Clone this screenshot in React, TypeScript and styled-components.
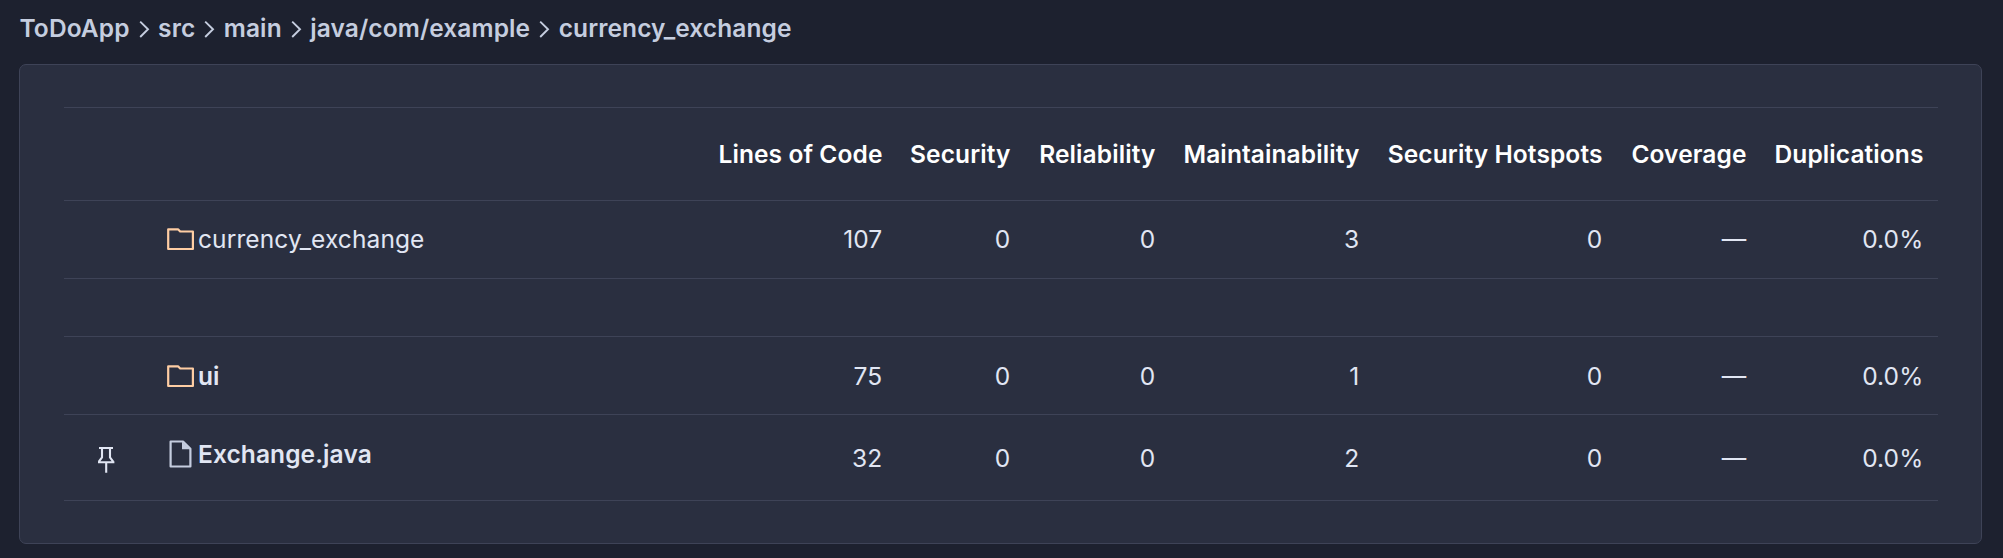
import React from "react";
import styled, { createGlobalStyle } from "styled-components";

const GlobalStyle = createGlobalStyle`
  * { box-sizing: border-box; }
  body {
    margin: 0;
    min-height: 558px;
    background: rgb(29, 33, 47);
    color: rgb(225, 230, 243);
    font: 400 24.5px/35px Inter, "Liberation Sans", sans-serif;
    letter-spacing: 0.1px;
  }
`;

const LINE = "rgb(62, 67, 87)";

const Page = styled.main`
  padding: 11px 21px 14px 19px;
`;

const Breadcrumbs = styled.nav`
  display: flex;
  align-items: center;
  height: 35px;
  margin-bottom: 18px;
  color: rgb(197, 205, 223);
  font-weight: 600;
`;

const Crumb = styled.span`
  padding-left: 0.5px;
  white-space: nowrap;
`;

const Panel = styled.section`
  height: 480px;
  padding: 42px 43px 0 44px;
  background: rgb(42, 47, 64);
  border: 1px solid ${LINE};
  border-radius: 7px;
`;

const Table = styled.div`
  border-top: 1px solid ${LINE};
`;

const Row = styled.div<{ $height: number; $drop?: number }>`
  display: grid;
  grid-template-columns: 88px 745px 128px 145px 204px 243px 144px 177px;
  align-items: center;
  height: ${(p) => p.$height}px;
  padding-top: ${(p) => p.$drop ?? 0}px;
  border-bottom: 1px solid ${LINE};
`;

const HeadRow = styled(Row)`
  grid-template-columns: 833px 128px 145px 204px 243px 144px 177px;
`;

const HeadCell = styled.div`
  padding-right: 14.5px;
  color: #fff;
  font-weight: 600;
  text-align: right;
  white-space: nowrap;
`;

const ValueCell = styled.div`
  padding-right: 14.7px;
  text-align: right;
`;

const NameAndLines = styled.div`
  display: grid;
  grid-template-columns: 1fr 100px;
  align-items: center;
`;

const NameCell = styled.div<{ $strong?: boolean; $raised?: boolean }>`
  display: grid;
  grid-template-columns: 32px 1fr;
  align-items: center;
  padding: 0 0 ${(p) => (p.$raised ? 9 : 0)}px 14px;
  font-weight: ${(p) => (p.$strong ? 600 : 400)};
`;

const PinCell = styled.div`
  padding-left: 28px;
`;

const Icon = styled.svg`
  display: block;
  width: 28px;
  height: 28px;
`;

const ChevronIcon = () => (
  <Icon viewBox="0 0 28 28" fill="none" stroke="currentColor" strokeWidth="1.9">
    <path d="M10.2 6.6l7.8 7.7-7.8 7.7" />
  </Icon>
);

const FolderIcon = () => (
  <Icon viewBox="0 0 28 28" fill="none" stroke="rgb(254, 205, 163)" strokeWidth="2.2">
    <path d="M2.2 3.3h9.8l2.2 2.2h12.7v17.5h-24.7z" strokeLinejoin="round" />
  </Icon>
);

const FileIcon = () => (
  <Icon viewBox="0 0 28 28" fill="none" stroke="rgb(197, 205, 223)" strokeWidth="2.2">
    <path d="M4.6 1.5h12.4l7.4 7.4v17.6h-19.8z" strokeLinejoin="round" />
    <path d="M16 1.5v7.7h8z" fill="rgb(197, 205, 223)" stroke="none" />
  </Icon>
);

const PinIcon = () => (
  <Icon viewBox="0 0 28 28" fill="none" stroke="currentColor" strokeWidth="2.1">
    <path d="M7 3h14M10 3v9.5l-2.8 3.7v1.1h13.6v-1.1l-2.8-3.7v-9.5M6 17.3h16.4M14.2 17.5v10.3" />
  </Icon>
);

const crumbs = ["ToDoApp", "src", "main", "java/com/example", "currency_exchange"];

const metrics = [
  "Lines of Code",
  "Security",
  "Reliability",
  "Maintainability",
  "Security Hotspots",
  "Coverage",
  "Duplications",
];

type Entry = {
  name: string;
  kind: "folder" | "file";
  strong?: boolean;
  pin?: boolean;
  height: number;
  drop?: number;
  values: string[];
};

const current: Entry = {
  name: "currency_exchange",
  kind: "folder",
  height: 78,
  values: ["107", "0", "0", "3", "0", "—", "0.0%"],
};

const children: Entry[] = [
  {
    name: "ui",
    kind: "folder",
    strong: true,
    height: 78,
    drop: 2,
    values: ["75", "0", "0", "1", "0", "—", "0.0%"],
  },
  {
    name: "Exchange.java",
    kind: "file",
    strong: true,
    pin: true,
    height: 86,
    drop: 2,
    values: ["32", "0", "0", "2", "0", "—", "0.0%"],
  },
];

const ComponentRow = ({ entry }: { entry: Entry }) => (
  <Row $height={entry.height} $drop={entry.drop}>
    <PinCell>{entry.pin && <PinIcon />}</PinCell>
    <NameAndLines>
      <NameCell $strong={entry.strong} $raised={entry.kind === "file"}>
        {entry.kind === "folder" ? <FolderIcon /> : <FileIcon />}
        <span>{entry.name}</span>
      </NameCell>
      <ValueCell>{entry.values[0]}</ValueCell>
    </NameAndLines>
    {entry.values.slice(1).map((value, i) => (
      <ValueCell key={i}>{value}</ValueCell>
    ))}
  </Row>
);

export default function App() {
  return (
    <Page>
      <GlobalStyle />
      <Breadcrumbs>
        {crumbs.map((crumb, i) => (
          <React.Fragment key={crumb}>
            {i > 0 && <ChevronIcon />}
            <Crumb>{crumb}</Crumb>
          </React.Fragment>
        ))}
      </Breadcrumbs>
      <Panel>
        <Table>
          <HeadRow $height={93}>
            {metrics.map((metric) => (
              <HeadCell key={metric}>{metric}</HeadCell>
            ))}
          </HeadRow>
          <ComponentRow entry={current} />
          <Row $height={58} />
          {children.map((entry) => (
            <ComponentRow key={entry.name} entry={entry} />
          ))}
        </Table>
      </Panel>
    </Page>
  );
}
